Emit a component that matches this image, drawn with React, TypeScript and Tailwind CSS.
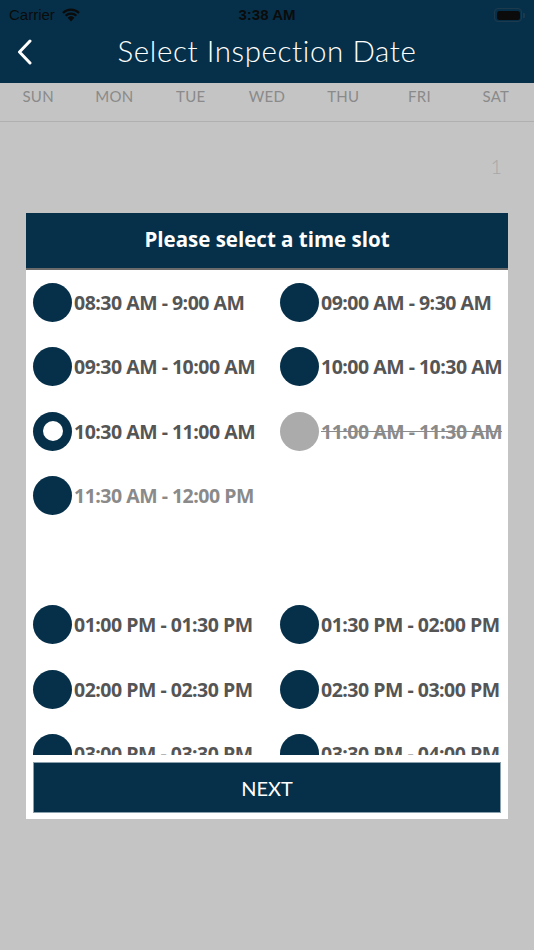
import React from "react";

type Slot = { label: string; state?: "selected" | "disabled" | "light" } | null;

const rows: [Slot, Slot][] = [
  [{ label: "08:30 AM - 9:00 AM" }, { label: "09:00 AM - 9:30 AM" }],
  [{ label: "09:30 AM - 10:00 AM" }, { label: "10:00 AM - 10:30 AM" }],
  [{ label: "10:30 AM - 11:00 AM", state: "selected" }, { label: "11:00 AM - 11:30 AM", state: "disabled" }],
  [{ label: "11:30 AM - 12:00 PM", state: "light" }, null],
  [null, null],
  [{ label: "01:00 PM - 01:30 PM" }, { label: "01:30 PM - 02:00 PM" }],
  [{ label: "02:00 PM - 02:30 PM" }, { label: "02:30 PM - 03:00 PM" }],
  [{ label: "03:00 PM - 03:30 PM" }, { label: "03:30 PM - 04:00 PM" }],
];

function SlotView({ slot }: { slot: Slot }) {
  if (!slot) return <div />;
  const { state } = slot;
  return (
    <div className="flex items-center">
      {state === "selected" ? (
        <div className="w-[39px] h-[39px] rounded-full bg-[#063049] flex items-center justify-center shrink-0">
          <div className="w-[20px] h-[20px] rounded-full bg-white" />
        </div>
      ) : (
        <div
          className={
            "w-[39px] h-[39px] rounded-full shrink-0 " +
            (state === "disabled" ? "bg-[#ababab]" : "bg-[#063049]")
          }
        />
      )}
      <span
        className={
          "ml-[2px] text-[19.5px] font-bold tracking-[-0.5px] whitespace-nowrap " +
          (state === "disabled"
            ? "text-[#8a8a8a] line-through"
            : state === "light"
            ? "text-[#8a8a8a]"
            : "text-[#555555]")
        }
        style={{ fontFamily: '"Open Sans", sans-serif' }}
      >
        {slot.label}
      </span>
    </div>
  );
}

export default function App() {
  const days = ["SUN", "MON", "TUE", "WED", "THU", "FRI", "SAT"];
  return (
    <div className="w-[534px] h-[950px] bg-[#c4c4c4] flex flex-col overflow-hidden" style={{ fontFamily: "Lato, sans-serif" }}>
      {/* status bar + nav */}
      <div className="bg-[#063049] h-[83px] flex flex-col">
        <div className="h-[30px] relative flex items-center px-[9px] text-[#0b0b0b]">
          <span className="text-[15px]" style={{ fontFamily: '"Liberation Sans", sans-serif' }}>Carrier</span>
          <svg className="ml-[6px]" width="20" height="14" viewBox="0 0 20 14">
            <path d="M10 13.5 L6.6 9.7 A5 5 0 0 1 13.4 9.7 Z" fill="#0b0b0b" />
            <path d="M3.9 7 A8.8 8.8 0 0 1 16.1 7 L14.6 8.6 A6.6 6.6 0 0 0 5.4 8.6 Z" fill="#0b0b0b" />
            <path d="M1.2 4.2 A12.6 12.6 0 0 1 18.8 4.2 L17.3 5.8 A10.4 10.4 0 0 0 2.7 5.8 Z" fill="#0b0b0b" />
          </svg>
          <span
            className="absolute left-0 right-0 text-center text-[15px] font-bold"
            style={{ fontFamily: '"Liberation Sans", sans-serif' }}
          >
            3:38 AM
          </span>
          <div className="ml-auto flex items-center">
            <div className="w-[28px] h-[14px] rounded-[4px] border border-[#1d3a4c] p-[1.5px]">
              <div className="w-full h-full rounded-[2.5px] bg-[#0b0b0b]" />
            </div>
            <div className="w-[2px] h-[5px] bg-[#1d3a4c] rounded-r-[1px] ml-[1px]" />
          </div>
        </div>
        <div className="flex-1 relative flex items-center justify-center">
          <svg className="absolute left-[16px] top-[9px]" width="17" height="26" viewBox="0 0 17 26">
            <path d="M14 2 L3.5 13 L14 24" fill="none" stroke="white" strokeWidth="3" strokeLinecap="round" strokeLinejoin="round" />
          </svg>
          <span className="text-white text-[29.5px] font-light tracking-[0.6px] -mt-[10px]" style={{ fontFamily: '"Lato", sans-serif' }}>
            Select Inspection Date
          </span>
        </div>
      </div>
      {/* day header */}
      <div className="h-[39px] border-b border-[#b0b0b0] grid grid-cols-7 items-start pt-[2px]">
        {days.map((d) => (
          <div key={d} className="text-center text-[15px] text-[#8a8a8a] tracking-[0.3px]" style={{ fontFamily: '"Lato", sans-serif' }}>
            {d}
          </div>
        ))}
      </div>
      <div className="h-[91px] flex justify-end pr-[32px] pt-[34px]">
        <span className="text-[20px] text-[#a8a8a8] font-light leading-none">1</span>
      </div>
      {/* modal */}
      <div className="ml-[26px] w-[482px] bg-white flex flex-col">
        <div className="h-[57px] bg-[#063049] border-b-[2px] border-[#6b6b6b] flex items-center justify-center">
          <span className="text-white text-[20.5px] font-bold -mt-[3px]" style={{ fontFamily: '"Open Sans", sans-serif' }}>
            Please select a time slot
          </span>
        </div>
        <div className="h-[485px] overflow-hidden pl-[7px]">
          {rows.map((r, i) => (
            <div key={i} className="h-[64.5px] grid grid-cols-[247px_1fr] items-center">
              <SlotView slot={r[0]} />
              <SlotView slot={r[1]} />
            </div>
          ))}
        </div>
        <div className="px-[7px] pt-[7px] pb-[6px]">
          <div className="h-[51px] bg-[#063049] border border-[#8aa0ad] flex items-center justify-center">
            <span className="text-white text-[20px]" style={{ fontFamily: '"Lato", sans-serif' }}>NEXT</span>
          </div>
        </div>
      </div>
    </div>
  );
}
